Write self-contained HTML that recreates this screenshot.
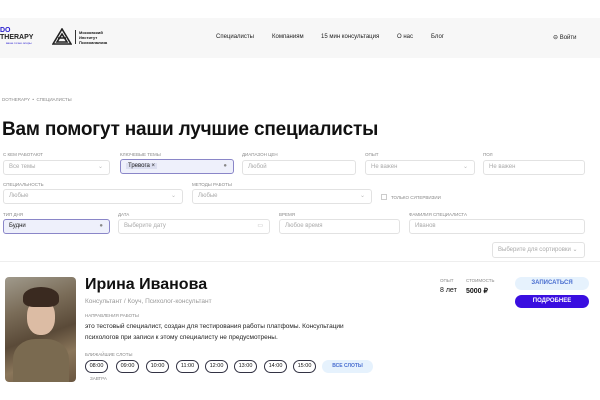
<!DOCTYPE html>
<html><head><meta charset="utf-8"><style>
*{box-sizing:border-box;margin:0;padding:0}
body{width:600px;height:400px;overflow:hidden;background:#fff;font-family:"Liberation Sans",sans-serif;color:#111;position:relative}
.a{position:absolute}
.lbl{position:absolute;font-size:4.5px;color:#888;text-transform:uppercase}
.in{position:absolute;height:15px;border:1px solid #e2e2e2;border-radius:3px;font-size:6px;color:#aaa;padding:0 5px;line-height:13px}
.sel{border-color:#8a86c8;background:#eef0fb;color:#222}
.ch{position:absolute;right:6px;top:0;font-size:6px;color:#bbb}
.slot{position:absolute;top:360px;width:23px;height:13px;border:1px solid #334;border-radius:7px;font-size:5.5px;text-align:center;line-height:11px}
.nav{position:absolute;top:34px;font-size:6px;color:#222}
</style></head><body>
<div class="a" style="left:0;top:18px;width:600px;height:40px;background:#f7f7f7"></div>
<div class="a" style="left:0;top:27px;font-size:7px;font-weight:bold;color:#2a1fd0;line-height:7px">DO<br><span style="color:#222">THERAPY</span></div>
<div class="a" style="left:6px;top:41px;font-size:3px;color:#2a1fd0">ваше точно опоры</div>
<svg class="a" style="left:52px;top:28px" width="20" height="17" viewBox="0 0 20 17"><path d="M10 1L1 16H19Z M10 6L5 14H15Z M6 10H14" fill="none" stroke="#222" stroke-width="1.6"/></svg>
<div class="a" style="left:75px;top:30px;width:1px;height:14px;background:#333"></div>
<div class="a" style="left:79px;top:30px;font-size:4px;font-weight:bold;line-height:5px">Московский<br>Институт<br>Психоанализа</div>
<div class="nav" style="left:216px">Специалисты</div>
<div class="nav" style="left:272px">Компаниям</div>
<div class="nav" style="left:321px">15 мин консультация</div>
<div class="nav" style="left:397px">О нас</div>
<div class="nav" style="left:431px">Блог</div>
<div class="nav" style="left:553px">⊖ Войти</div>
<div class="a" style="left:2px;top:97px;font-size:4.5px;color:#888">DOTHERAPY &nbsp;•&nbsp; СПЕЦИАЛИСТЫ</div>
<div class="a" style="left:2px;top:119px;font-size:19px;font-weight:bold;letter-spacing:-0.2px">Вам помогут наши лучшие специалисты</div>

<div class="lbl" style="left:3px;top:152px">С кем работают</div><div class="in" style="left:3px;top:160px;width:107px">Все темы<span class="ch">⌄</span></div>
<div class="lbl" style="left:120px;top:152px">Ключевые темы</div><div class="in sel" style="left:120px;top:159px;width:114px"><span style="background:#dcdff0;padding:0 2px">Тревога ×</span><span class="ch" style="color:#888">●</span></div>
<div class="lbl" style="left:242px;top:152px">Диапазон цен</div><div class="in" style="left:242px;top:160px;width:114px">Любой</div>
<div class="lbl" style="left:365px;top:152px">Опыт</div><div class="in" style="left:365px;top:160px;width:110px">Не важен<span class="ch">⌄</span></div>
<div class="lbl" style="left:483px;top:152px">Пол</div><div class="in" style="left:483px;top:160px;width:102px">Не важен</div>

<div class="lbl" style="left:3px;top:182px">Специальность</div><div class="in" style="left:3px;top:189px;width:180px">Любые<span class="ch">⌄</span></div>
<div class="lbl" style="left:192px;top:182px">Методы работы</div><div class="in" style="left:192px;top:189px;width:180px">Любые<span class="ch">⌄</span></div>
<div class="a" style="left:381px;top:194px;width:6px;height:6px;border:1px solid #ccc"></div>
<div class="lbl" style="left:391px;top:195px">только супервизии</div>

<div class="lbl" style="left:3px;top:212px">Тип дня</div><div class="in sel" style="left:3px;top:219px;width:107px">Будни<span class="ch" style="color:#888">●</span></div>
<div class="lbl" style="left:118px;top:212px">Дата</div><div class="in" style="left:118px;top:219px;width:152px">Выберите дату<span class="ch">▭</span></div>
<div class="lbl" style="left:279px;top:212px">Время</div><div class="in" style="left:279px;top:219px;width:121px">Любое время</div>
<div class="lbl" style="left:409px;top:212px">Фамилия специалиста</div><div class="in" style="left:409px;top:219px;width:176px">Иванов</div>
<div class="in" style="left:492px;top:242px;width:93px;height:16px;line-height:14px">Выберите для сортировки ⌄</div>
<div class="a" style="left:0;top:261px;width:600px;height:1px;background:#eee"></div>

<div class="a" style="left:5px;top:277px;width:71px;height:105px;border-radius:4px;background:linear-gradient(160deg,#a09a8c 0%,#7a6c58 30%,#5a4a38 55%,#8a765a 75%,#6a5640 100%);overflow:hidden">
<div class="a" style="left:22px;top:22px;width:28px;height:36px;border-radius:45%;background:#dcbca4"></div>
<div class="a" style="left:18px;top:10px;width:36px;height:20px;border-radius:50% 50% 30% 30%;background:#3a2a20"></div>
<div class="a" style="left:8px;top:62px;width:56px;height:50px;border-radius:40% 40% 0 0;background:#7a6a50"></div></div>
<div class="a" style="left:85px;top:276px;font-size:16px;font-weight:bold">Ирина Иванова</div>
<div class="a" style="left:85px;top:298px;font-size:6.5px;color:#999">Консультант / Коуч, Психолог-консультант</div>
<div class="lbl" style="left:85px;top:313px">Направления работы</div>
<div class="a" style="left:85px;top:321px;font-size:6.5px;line-height:11px;color:#222">это тестовый специалист, создан для тестирования работы платфомы. Консультации<br>психологов при записи к этому специалисту не предусмотрены.</div>
<div class="lbl" style="left:85px;top:352px">Ближайшие слоты</div>
<div class="slot" style="left:85px">08:00</div><div class="slot" style="left:116px">09:00</div><div class="slot" style="left:146px">10:00</div><div class="slot" style="left:176px">11:00</div><div class="slot" style="left:205px">12:00</div><div class="slot" style="left:234px">13:00</div><div class="slot" style="left:264px">14:00</div><div class="slot" style="left:293px">15:00</div>
<div class="a" style="left:322px;top:360px;width:51px;height:13px;border-radius:7px;background:#e6f2fd;color:#4a6fd0;font-size:5px;font-weight:bold;text-align:center;line-height:13px">ВСЕ СЛОТЫ</div>
<div class="lbl" style="left:90px;top:376px">завтра</div>

<div class="lbl" style="left:440px;top:278px">Опыт</div><div class="a" style="left:440px;top:287px;font-size:7px">8 лет</div>
<div class="lbl" style="left:466px;top:278px">Стоимость</div><div class="a" style="left:466px;top:287px;font-size:7px;font-weight:bold">5000 ₽</div>
<div class="a" style="left:515px;top:277px;width:74px;height:13px;border-radius:7px;background:#e6f2fd;color:#4a6fd0;font-size:6px;font-weight:bold;text-align:center;line-height:13px">ЗАПИСАТЬСЯ</div>
<div class="a" style="left:515px;top:295px;width:74px;height:13px;border-radius:7px;background:#3a0ee0;color:#fff;font-size:6px;font-weight:bold;text-align:center;line-height:13px">ПОДРОБНЕЕ</div>
</body></html>
